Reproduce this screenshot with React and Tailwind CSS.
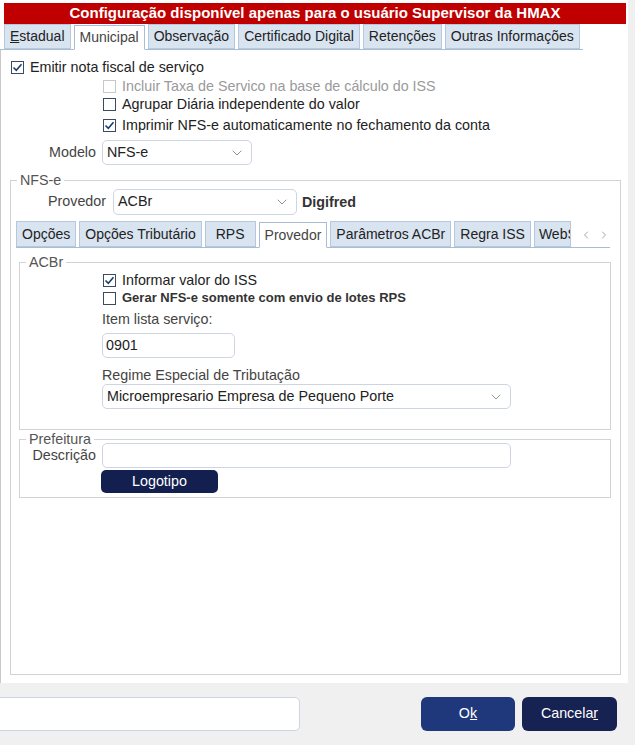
import { ChevronDown, ChevronLeft, ChevronRight } from "lucide-react"

function Check({ checked, disabled }) {
  return (
    <span
      className={`w-[13px] h-[13px] shrink-0 border flex items-center justify-center bg-white ${
        disabled ? "border-[#c8c8c8]" : "border-[#3b4a5e]"
      }`}
    >
      {checked && (
        <svg width="11" height="11" viewBox="0 0 11 11">
          <path d="M1.5 5.5 L4.3 8.3 L9.5 2.2" fill="none" stroke="#1b3d6e" strokeWidth="1.6" />
        </svg>
      )}
    </span>
  )
}

function CheckRow({ checked, disabled, bold, children, className = "" }) {
  return (
    <div className={`flex items-center gap-[6px] h-[18px] ${className}`}>
      <Check checked={checked} disabled={disabled} />
      <span
        className={`leading-[18px] whitespace-nowrap ${disabled ? "text-[#9a9a9a]" : "text-[#222]"} ${
          bold ? "font-bold text-[13px] text-[#333]" : ""
        }`}
      >
        {children}
      </span>
    </div>
  )
}

function Select({ value, className = "" }) {
  return (
    <div
      className={`h-[25px] bg-white border border-[#cdd5e2] rounded-[5px] flex items-center pl-[4px] pr-[6px] ${className}`}
    >
      <span className="flex-1 truncate text-[#222]">{value}</span>
      <ChevronDown size={16} strokeWidth={1.2} className="text-[#777]" />
    </div>
  )
}

function Tab({ active, children, className = "" }) {
  return (
    <div
      className={`h-full flex items-center px-[5px] border whitespace-nowrap text-[14px] ${
        active
          ? "bg-white border-[#a9bcd3] border-b-white relative z-10 -mb-px h-[26px] text-[#444]"
          : "bg-[#d9e4f1] border-[#b7c8dc] text-[#222] mt-[2px] h-[24px]"
      } ${className}`}
    >
      {children}
    </div>
  )
}

function Group({ label, className = "", children }) {
  return (
    <div className={`relative border border-[#d3d3d3] ${className}`}>
      <span className="absolute -top-[9px] left-[6px] px-[3px] bg-white text-[#555] leading-[16px]">
        {label}
      </span>
      {children}
    </div>
  )
}

export default function App() {
  return (
    <div
      className="w-[635px] h-[745px] bg-[#f0f0f0] overflow-hidden text-[14.3px] flex flex-col"
      style={{ fontFamily: '"Liberation Sans", Arial, sans-serif' }}
    >
      <div className="bg-white w-[628px] pt-[3px]">
        <div className="ml-[4px] w-[622px] h-[21px] bg-[#c00000] text-white font-bold text-[15px] flex items-center justify-center">
          Configuração disponível apenas para o usuário Supervisor da HMAX
        </div>
        <div className="flex items-end gap-[3px] pl-[4px] h-[26px] border-b border-[#a9bcd3] mr-[45px]">
          <Tab>
            <span><span className="underline">E</span>stadual</span>
          </Tab>
          <Tab active>Municipal</Tab>
          <Tab>Observação</Tab>
          <Tab>Certificado Digital</Tab>
          <Tab>Retenções</Tab>
          <Tab>Outras Informações</Tab>
        </div>
      </div>

      <div className="w-[628px] h-[633px] bg-white border-l border-[#c9c9c9] pt-[8px] flex flex-col">
        <CheckRow checked className="ml-[10px]">Emitir nota fiscal de serviço</CheckRow>
        <CheckRow disabled className="ml-[102px] mt-[1px]">Incluir Taxa de Servico na base de cálculo do ISS</CheckRow>
        <CheckRow className="ml-[102px]">Agrupar Diária independente do valor</CheckRow>
        <CheckRow checked className="ml-[102px] mt-[3px]">Imprimir NFS-e automaticamente no fechamento da conta</CheckRow>

        <div className="flex items-center mt-[6px]">
          <span className="w-[96px] text-right pr-[1px] text-[#444]">Modelo</span>
          <Select value="NFS-e" className="ml-[5px] w-[150px]" />
        </div>

        <Group label="NFS-e" className="ml-[9px] w-[611px] mt-[15px] flex-1 mb-[8px]">
          <div className="flex items-center mt-[8px] h-[26px]">
            <span className="ml-[37px] text-[#444]">Provedor</span>
            <Select value="ACBr" className="ml-[7px] w-[184px] h-[26px]" />
            <span className="ml-[5px] font-bold text-[#333] h-[16px] overflow-hidden leading-[17px]">Digifred</span>
          </div>

          <div className="flex items-end gap-[3px] h-[27px] mt-[6px] ml-[5px] mr-[10px] border-b border-[#a9bcd3]">
            <Tab>Opções</Tab>
            <Tab>Opções Tributário</Tab>
            <Tab className="px-[10px]">RPS</Tab>
            <Tab active className="px-[4px]">Provedor</Tab>
            <Tab className="px-[4px]">Parâmetros ACBr</Tab>
            <Tab className="px-[4px]">Regra ISS</Tab>
            <Tab className="w-[44px] overflow-hidden pr-0 pl-[4px]">WebS</Tab>
            <div className="flex items-center gap-[6px] h-[24px] ml-[6px] text-[#9aa]">
              <ChevronLeft size={12} />
              <ChevronRight size={12} />
            </div>
          </div>

          <Group label="ACBr" className="ml-[8px] w-[592px] h-[168px] mt-[14px]">
            <CheckRow checked className="ml-[83px] mt-[8px]">Informar valor do ISS</CheckRow>
            <CheckRow bold className="ml-[83px]">Gerar NFS-e somente com envio de lotes RPS</CheckRow>
            <div className="ml-[82px] mt-[3px] text-[#444] leading-[18px]">Item lista serviço:</div>
            <div className="ml-[82px] mt-[5px] w-[133px] h-[25px] border border-[#cdd5e2] rounded-[5px] flex items-center px-[3px] text-[#222]">
              0901
            </div>
            <div className="ml-[82px] mt-[8px] text-[#444] leading-[18px]">Regime Especial de Tributação</div>
            <Select
              value="Microempresario Empresa de Pequeno Porte"
              className="ml-[82px] mt-[0px] w-[409px]"
            />
          </Group>

          <Group label="Prefeitura" className="ml-[8px] w-[592px] h-[59px] mt-[9px]">
            <div className="flex items-center mt-[3px]">
              <span className="w-[76px] text-right text-[#444]">Descrição</span>
              <div className="ml-[6px] w-[409px] h-[25px] border border-[#cdd5e2] rounded-[5px]" />
            </div>
            <div className="ml-[81px] mt-[2px] w-[117px] h-[23px] bg-[#13204f] rounded-[5px] text-white flex items-center justify-center">
              Logotipo
            </div>
          </Group>
        </Group>
      </div>

      <div className="flex items-center h-[62px] w-[635px]">
        <div className="-ml-[4px] w-[304px] h-[34px] bg-white border border-[#cdd5e2] rounded-[5px]" />
        <div className="ml-[121px] w-[94px] h-[34px] bg-[#1f387b] rounded-[6px] text-white flex items-center justify-center">
          O<span className="underline">k</span>
        </div>
        <div className="ml-[7px] w-[95px] h-[34px] bg-[#152252] rounded-[6px] text-white flex items-center justify-center">
          Cancela<span className="underline">r</span>
        </div>
      </div>
    </div>
  )
}
